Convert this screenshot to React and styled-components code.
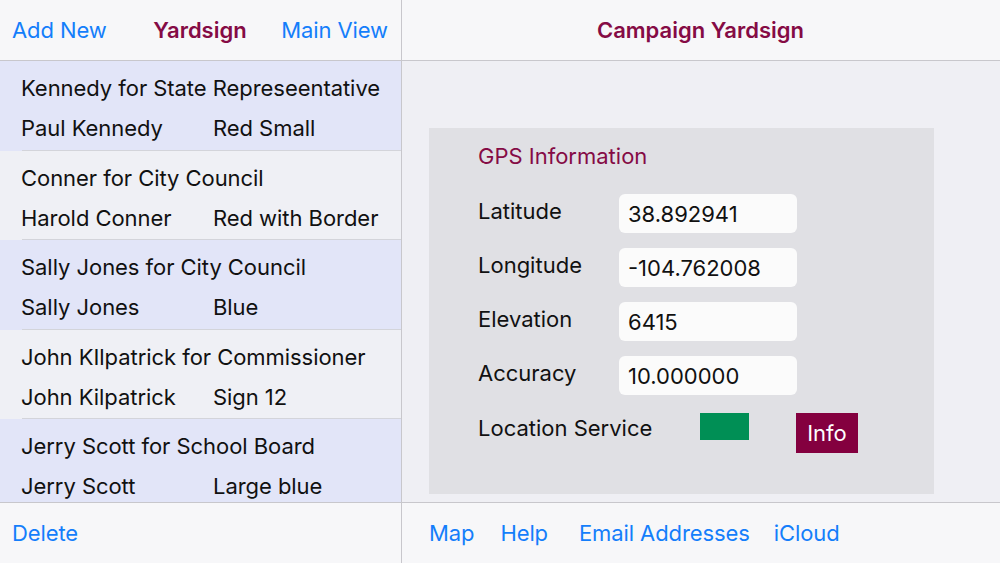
import React from "react";
import styled, { createGlobalStyle } from "styled-components";

const GlobalStyle = createGlobalStyle`
    html, body {
        margin: 0;
        padding: 0;
        background: #efeff4;
        font-family: Inter, "Open Sans", "Liberation Sans", sans-serif;
        -webkit-font-smoothing: antialiased;
    }
`;

const Screen = styled.div`
    display: flex;
    width: 1000px;
    height: 563px;
    overflow: hidden;
`;

const MasterPane = styled.div`
    display: flex;
    flex-direction: column;
    width: 401px;
    border-right: 1px solid #c8c7cc;
`;

const DetailPane = styled.div`
    display: flex;
    flex-direction: column;
    flex: 1;
`;

const NavBar = styled.div`
    display: grid;
    grid-template-columns: ${(p) => (p.$single ? "1fr" : "1fr auto 1fr")};
    justify-items: ${(p) => (p.$single ? "center" : "stretch")};
    align-items: center;
    height: 61px;
    padding: 0 13px 0 12px;
    background: #f7f7f9;
    border-bottom: 1px solid #c8c7cc;
    box-sizing: border-box;
    flex-shrink: 0;
`;

const Toolbar = styled.div`
    display: flex;
    align-items: center;
    height: 61px;
    padding: 0 0 0 ${(p) => p.$pad || 12}px;
    background: #f7f7f9;
    border-top: 1px solid #c8c7cc;
    box-sizing: border-box;
    flex-shrink: 0;
`;

const BarButton = styled.span`
    color: #147efb;
    font-size: 22px;
    letter-spacing: -0.1px;
    margin-left: ${(p) => p.$space || 0}px;
    text-align: ${(p) => p.$align || "left"};
`;

const BarTitle = styled.span`
    color: #850b45;
    font-size: 22px;
    font-weight: 600;
`;

const List = styled.div`
    flex: 1;
    display: flex;
    flex-direction: column;
    overflow: hidden;
`;

const Row = styled.div`
    position: relative;
    display: flex;
    flex-direction: column;
    gap: 12px;
    height: 89.6px;
    flex-shrink: 0;
    padding: 13px 0 0 21px;
    box-sizing: border-box;
    background: ${(p) => (p.$alt ? "#eff0f5" : "#e2e5f8")};
    color: #111;
    font-size: 22px;
    letter-spacing: -0.05px;

    &:not(:last-child)::after {
        content: "";
        position: absolute;
        left: 22px;
        right: 0;
        bottom: 0;
        height: 1px;
        background: #d3d4da;
    }
`;

const RowLine = styled.div`
    display: flex;
    line-height: 28px;
`;

const RowName = styled.span`
    width: 192px;
`;

const Content = styled.div`
    flex: 1;
    background: #efeff4;
    padding: 67px 0 0 27px;
    box-sizing: border-box;
`;

const Panel = styled.div`
    width: 505px;
    height: 366px;
    background: #e0e0e4;
    padding: 14px 0 0 49px;
    box-sizing: border-box;
`;

const PanelTitle = styled.div`
    color: #850b45;
    font-size: 22px;
    line-height: 28px;
    margin-bottom: 24px;
`;

const FieldGrid = styled.div`
    display: grid;
    grid-template-columns: 141px 178px;
    row-gap: 15px;
    align-items: center;
`;

const Label = styled.span`
    font-size: 22px;
    color: #111;
    margin-top: -6px;
`;

const Field = styled.div`
    height: 39px;
    border-radius: 6px;
    background: #fbfbfb;
    display: flex;
    align-items: center;
    padding-left: 9px;
    font-size: 22px;
    color: #111;
`;

const ServiceRow = styled.div`
    display: flex;
    align-items: flex-start;
    margin-top: 18px;
`;

const ServiceLabel = styled.span`
    width: 222px;
    margin-top: 1px;
    font-size: 22px;
    color: #111;
    line-height: 28px;
`;

const StatusSwatch = styled.div`
    width: 49px;
    height: 27px;
    background: #008f55;
`;

const InfoButton = styled.div`
    margin-left: 47px;
    width: 62px;
    height: 40px;
    background: #84003f;
    color: #fff;
    font-size: 22px;
    display: flex;
    align-items: center;
    justify-content: center;
`;

const signs = [
    { title: "Kennedy for State Represeentative", name: "Paul Kennedy", kind: "Red Small" },
    { title: "Conner for City Council", name: "Harold Conner", kind: "Red with Border" },
    { title: "Sally Jones for City Council", name: "Sally Jones", kind: "Blue" },
    { title: "John KIlpatrick for Commissioner", name: "John Kilpatrick", kind: "Sign 12" },
    { title: "Jerry Scott for School Board", name: "Jerry Scott", kind: "Large blue" },
];

const gps = [
    ["Latitude", "38.892941"],
    ["Longitude", "-104.762008"],
    ["Elevation", "6415"],
    ["Accuracy", "10.000000"],
];

export default function App() {
    return (
        <Screen>
            <GlobalStyle />
            <MasterPane>
                <NavBar>
                    <BarButton>Add New</BarButton>
                    <BarTitle>Yardsign</BarTitle>
                    <BarButton $align="right">Main View</BarButton>
                </NavBar>
                <List>
                    {signs.map((s, i) => (
                        <Row key={s.title} $alt={i % 2 === 1}>
                            <RowLine>{s.title}</RowLine>
                            <RowLine>
                                <RowName>{s.name}</RowName>
                                <span>{s.kind}</span>
                            </RowLine>
                        </Row>
                    ))}
                </List>
                <Toolbar>
                    <BarButton>Delete</BarButton>
                </Toolbar>
            </MasterPane>
            <DetailPane>
                <NavBar $single>
                    <BarTitle>Campaign Yardsign</BarTitle>
                </NavBar>
                <Content>
                    <Panel>
                        <PanelTitle>GPS Information</PanelTitle>
                        <FieldGrid>
                            {gps.map(([label, value]) => (
                                <React.Fragment key={label}>
                                    <Label>{label}</Label>
                                    <Field>{value}</Field>
                                </React.Fragment>
                            ))}
                        </FieldGrid>
                        <ServiceRow>
                            <ServiceLabel>Location Service</ServiceLabel>
                            <StatusSwatch />
                            <InfoButton>Info</InfoButton>
                        </ServiceRow>
                    </Panel>
                </Content>
                <Toolbar $pad={27}>
                    <BarButton>Map</BarButton>
                    <BarButton $space={26}>Help</BarButton>
                    <BarButton $space={31}>Email Addresses</BarButton>
                    <BarButton $space={24}>iCloud</BarButton>
                </Toolbar>
            </DetailPane>
        </Screen>
    );
}
